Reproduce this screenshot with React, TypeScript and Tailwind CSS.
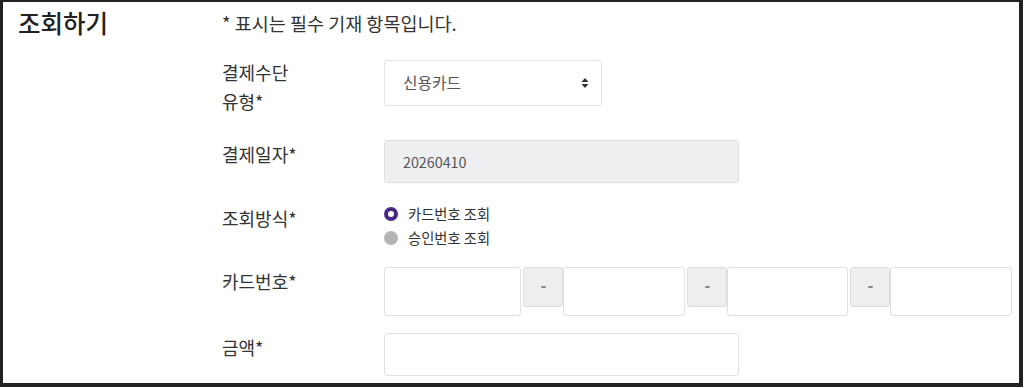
import React from "react";

const font = { fontFamily: '"Noto Sans CJK KR", "Noto Sans", sans-serif' };

function Label({ children }: { children: React.ReactNode }) {
  return <div className="w-[162px] shrink-0 text-[18px] leading-[29px] text-[#333]">{children}</div>;
}

function Addon() {
  return (
    <div className="ml-[2px] w-[40px] h-[40px] shrink-0 bg-[#eceef0] border border-[#dcdcdc] rounded-[3px] flex items-center justify-center">
      <span className="block w-[5px] h-[2px] bg-[#888] rounded-full" />
    </div>
  );
}

function CardInput({ w }: { w: string }) {
  return <div className={`${w} h-[49px] shrink-0 border border-[#e0e0e0] rounded-[3px] bg-white`} />;
}

export default function App() {
  return (
    <div className="w-[1024px] h-[388px] bg-white" style={font}>
      <div className="w-[1023px] h-[387px] border-t-[2px] border-l-[3px] border-r-[4px] border-b-[4px] border-[#222] flex">
        <div className="w-[219px] shrink-0 pl-[15px] pt-[5px]">
          <h1 className="text-[24.5px] leading-[32px] font-medium text-[#222]">조회하기</h1>
        </div>
        <div className="flex-1 flex flex-col">
          <div className="pt-[8px] text-[18.5px] leading-[26px] text-[#333]">* 표시는 필수 기재 항목입니다.</div>
          <div className="flex items-start mt-[22px]">
            <Label>
              결제수단
              <br />
              유형*
            </Label>
            <div className="mt-[2px] w-[218px] h-[46px] border border-[#e2e2e2] rounded-[3px] flex items-center justify-between pl-[18px] pr-[12px] text-[15.8px] text-[#555]">
              <span>신용카드</span>
              <svg width="8" height="12" viewBox="0 0 8 12">
                <path d="M4 1 L7.5 5 L0.5 5 Z" fill="#333" />
                <path d="M4 11 L7.5 7 L0.5 7 Z" fill="#333" />
              </svg>
            </div>
          </div>
          <div className="flex items-start mt-[24px]">
            <Label>결제일자*</Label>
            <div className="w-[355px] h-[43px] bg-[#eeeff1] border border-[#e0e0e0] rounded-[3px] flex items-center pl-[18px] text-[14.3px] text-[#555]">
              20260410
            </div>
          </div>
          <div className="flex items-start mt-[21px]">
            <Label>조회방식*</Label>
            <div className="flex flex-col text-[14.3px] text-[#333] leading-[24px] mt-[-2px]">
              <div className="flex items-center gap-[10px]">
                <span className="w-[14px] h-[14px] rounded-full border-[4px] border-[#4a2a85] bg-white" />
                <span>카드번호 조회</span>
              </div>
              <div className="flex items-center gap-[10px]">
                <span className="w-[14px] h-[14px] rounded-full bg-[#b4b4b4]" />
                <span>승인번호 조회</span>
              </div>
            </div>
          </div>
          <div className="flex items-start mt-[17px]">
            <Label>카드번호*</Label>
            <div className="flex items-start">
              <CardInput w="w-[137px]" />
              <Addon />
              <CardInput w="w-[122px]" />
              <Addon />
              <CardInput w="w-[121px]" />
              <Addon />
              <CardInput w="w-[122px]" />
            </div>
          </div>
          <div className="flex items-start mt-[17px]">
            <Label>금액*</Label>
            <div className="w-[355px] h-[43px] border border-[#e0e0e0] rounded-[3px]" />
          </div>
        </div>
      </div>
    </div>
  );
}
